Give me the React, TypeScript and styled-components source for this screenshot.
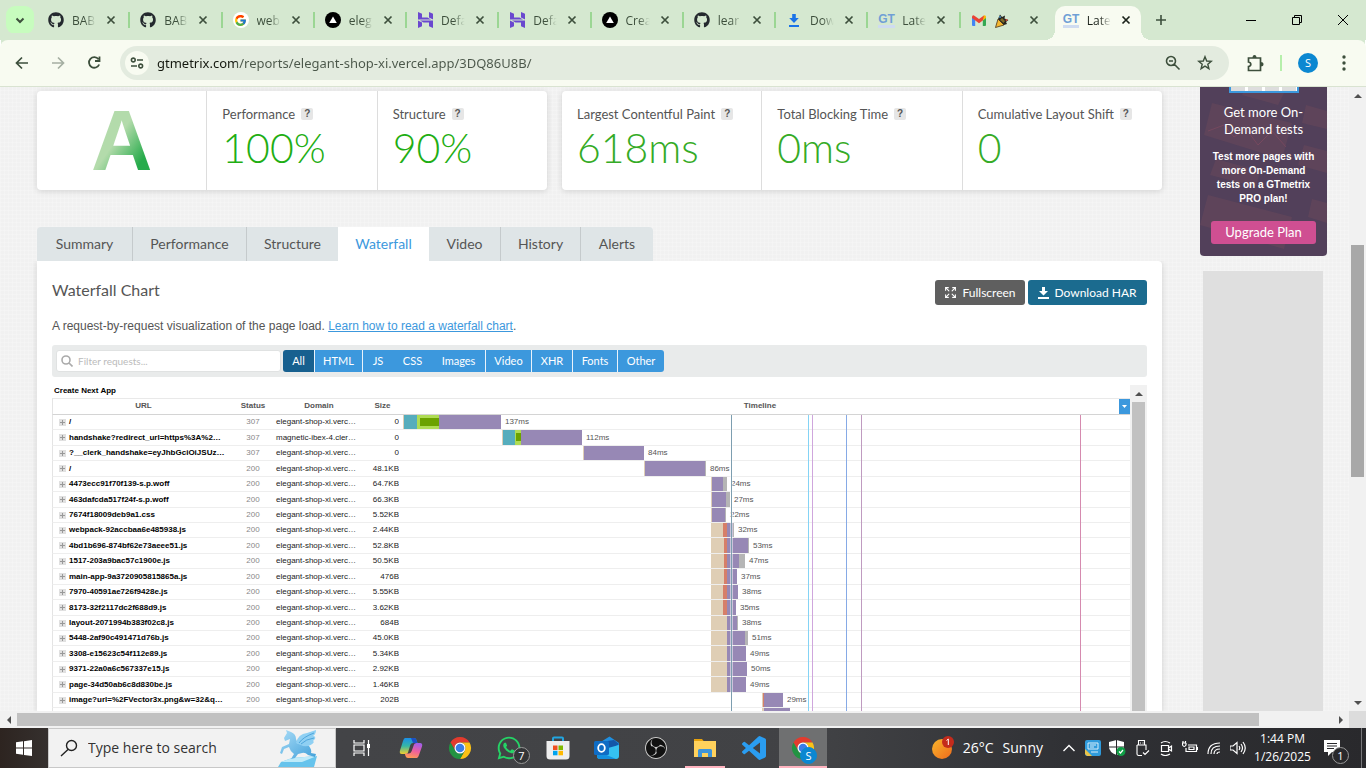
import React from 'react';
import styled, { createGlobalStyle, css } from 'styled-components';
import { FaGithub, FaWhatsapp } from 'react-icons/fa';
import { FcGoogle } from 'react-icons/fc';
import { SiObsstudio } from 'react-icons/si';
import { Expand } from 'lucide-react';

const UI = '"Open Sans", "Noto Sans", sans-serif';
const BRAND = 'Lato, "Open Sans", sans-serif';
const ARIAL = '"Liberation Sans", Arial, sans-serif';

const GlobalStyle = createGlobalStyle`
  * { box-sizing: border-box; }
  html, body { margin: 0; height: 100%; }
  #root { height: 100%; }
  body { font-family: ${ARIAL}; color: #555; overflow: hidden; }
  button, input { font: inherit; color: inherit; border: 0; margin: 0; padding: 0; background: none; }
  input { outline: 0; min-width: 0; }
  svg { display: block; flex: none; }
`;

const Screen = styled.div`
  height: 100vh;
  display: flex;
  flex-direction: column;
`;

/* ---------- browser tabs ---------- */

const TabStrip = styled.header`
  display: flex;
  height: 40px;
  flex: none;
  background: #d5e8d0;
  font: 12px/16px ${UI};
  color: #3d4f3c;
`;

const TabSearch = styled.button`
  width: 28px;
  height: 28px;
  margin: 6px 4px 0 6px;
  flex: none;
  border-radius: 9px;
  background: #c7fcbe;
  display: grid;
  place-items: center;
`;

const Tabs = styled.nav`
  display: grid;
  grid-template-columns: repeat(12, minmax(0, 1fr));
  flex: 0 1 1107px;
  min-width: 0;
`;

const Tab = styled.div<{ $active?: boolean; $last?: boolean }>`
  position: relative;
  min-width: 0;
  display: flex;
  align-items: center;
  padding-left: 10px;
  ${p => !p.$active && !p.$last && css`
    &::after {
      content: '';
      position: absolute;
      right: 0;
      top: 12px;
      width: 2px;
      height: 16px;
      background: #9bd693;
    }
  `}
  ${p => p.$active && css`
    margin: 6px 4px 0 2px;
    padding: 0 0 6px 8px;
    border-radius: 10px 10px 0 0;
    background: #f8fbf1;
    color: #1c231b;
    &::before, &::after {
      content: '';
      position: absolute;
      bottom: 0;
      width: 10px;
      height: 10px;
    }
    &::before { left: -10px; background: radial-gradient(circle at 0 0, transparent 10px, #f8fbf1 10px); }
    &::after { right: -10px; background: radial-gradient(circle at 100% 0, transparent 10px, #f8fbf1 10px); }
  `}
`;

const Favicon = styled.span`
  width: 16px;
  height: 16px;
  flex: none;
  display: grid;
  place-items: center;
`;

const GtMark = styled.span`
  font: bold 12px/12px ${ARIAL};
  color: #6f9fd6;
  border-bottom: 3px solid #cfdcf0;
`;

const Disc = styled.span<{ $bg: string; $size?: number }>`
  width: ${p => p.$size ?? 16}px;
  height: ${p => p.$size ?? 16}px;
  border-radius: 50%;
  background: ${p => p.$bg};
  display: grid;
  place-items: center;
`;

const TabTitle = styled.span`
  width: 25px;
  margin: 2px 8px 0 8px;
  flex: none;
  overflow: hidden;
  white-space: nowrap;
  mask-image: linear-gradient(90deg, #000 50%, transparent 95%);
`;

const PlainButton = styled.button<{ $w?: number }>`
  width: ${p => p.$w ?? 16}px;
  flex: none;
  display: grid;
  place-items: center;
  &:disabled { color: #a5afa2; }
`;

const WindowControls = styled.div`
  display: flex;
  margin-left: auto;
  color: #000;
`;

/* ---------- address row ---------- */

const Toolbar = styled.div`
  display: flex;
  align-items: center;
  height: 47px;
  flex: none;
  padding: 0 5px 0 4px;
  background: #f8fbf1;
  border-bottom: 1px solid #d9e3d1;
  border-radius: 8px 8px 0 0;
  box-shadow: 0 -8px 0 -1px #d5e8d0;
  color: #3d4f3c;
`;

const AddressBar = styled.div`
  display: flex;
  align-items: center;
  flex: 1;
  height: 34px;
  margin: 0 9px 0 8px;
  padding: 0 8px 0 5px;
  border-radius: 17px;
  background: #e3ebdf;
`;

const SiteInfo = styled.button`
  width: 24px;
  height: 24px;
  margin-right: 8px;
  border-radius: 50%;
  background: #f8fbf1;
  display: grid;
  place-items: center;
`;

const Address = styled.input`
  flex: 1;
  height: 24px;
  font: 13px/24px "Noto Sans", ${UI};
  background: linear-gradient(90deg, #14180f 80px, #4b574a 80px);
  background-clip: text;
  -webkit-text-fill-color: transparent;
`;

const Divider = styled.span`
  width: 2px;
  height: 16px;
  margin: 0 7px 0 8px;
  background: #b6efab;
`;

const Avatar = styled.button<{ $size: number }>`
  width: ${p => p.$size}px;
  height: ${p => p.$size}px;
  border-radius: 50%;
  background: #0b87d1;
  color: #fff;
  font: 11px/16px ${UI};
`;

/* ---------- page ---------- */

const Viewport = styled.div`
  flex: 1;
  min-height: 0;
  display: grid;
  grid-template: minmax(0, 1fr) 17px / minmax(0, 1fr) 17px;
`;

const Page = styled.main`
  overflow: hidden;
  display: flex;
  gap: 38px;
  padding: 4px 22px 0 37px;
  background:
    repeating-linear-gradient(0deg, rgba(255, 255, 255, 0.2) 0 1px, transparent 1px 4px),
    repeating-linear-gradient(90deg, rgba(255, 255, 255, 0.2) 0 1px, transparent 1px 4px),
    #f1f1f1;
`;

const Content = styled.div`
  flex: 1;
  min-width: 0;
  display: flex;
  flex-direction: column;
`;

const Scores = styled.section`
  display: flex;
  gap: 15px;
  height: 99px;
  flex: none;
`;

const ScoreCard = styled.div<{ $grow: number }>`
  flex: ${p => p.$grow} 1 0;
  min-width: 0;
  display: flex;
  border-radius: 4px;
  background: #fff;
  box-shadow: 0 1px 6px rgba(0, 0, 0, 0.14);
`;

const ScoreCell = styled.div`
  flex: 1 1 0;
  min-width: 0;
  padding: 15px 0 0 15px;
  font-family: ${BRAND};
  & + & { border-left: 1px solid #ddd; }
`;

const ScoreLabel = styled.div`
  display: flex;
  align-items: center;
  gap: 6px;
  font-size: 13px;
  line-height: 16px;
  white-space: nowrap;
`;

const Help = styled.button`
  width: 12px;
  height: 12px;
  border-radius: 2px;
  background: #e6e6e6;
  font: bold 10px/12px ${ARIAL};
`;

const ScoreValue = styled.div<{ $color: string }>`
  font-size: 41px;
  line-height: 52px;
  font-weight: 300;
  color: ${p => p.$color};
`;

const Grade = styled.div`
  font: bold 85px/99px ${ARIAL};
  text-align: center;
  margin-top: -15px;
  padding-right: 15px;
  background: linear-gradient(125deg, #b3dbab 44%, #27ab4b 62%);
  background-clip: text;
  color: transparent;
`;

const ReportTabs = styled.nav`
  display: flex;
  height: 34px;
  margin-top: 37px;
  flex: none;
`;

const ReportTab = styled.button<{ $w: number; $active?: boolean; $line?: boolean }>`
  width: ${p => p.$w}px;
  background: ${p => (p.$active ? '#fff' : '#dfe5e7')};
  color: ${p => (p.$active ? '#3c98dd' : '#555')};
  border-right: ${p => (p.$line ? '1px solid #c5cacc' : '0')};
  font: 14px/34px ${BRAND};
  &:first-child { border-top-left-radius: 4px; }
  &:last-child { border-top-right-radius: 4px; }
`;

const Panel = styled.section`
  flex: 1;
  min-height: 0;
  display: flex;
  flex-direction: column;
  padding: 19px 15px 0;
  border-radius: 0 4px 0 0;
  background: #fff;
  box-shadow: 0 1px 6px rgba(0, 0, 0, 0.14);
  clip-path: inset(0 -8px 0 -8px);
`;

const PanelHead = styled.div`
  display: flex;
  align-items: flex-start;
  gap: 3px;
  height: 25px;
  flex: none;
`;

const Title = styled.h2`
  margin: 0 auto 0 0;
  font: 16px/20px ${BRAND};
`;

const ActionButton = styled.button<{ $bg: string; $w: number }>`
  display: flex;
  align-items: center;
  justify-content: center;
  gap: 5px;
  width: ${p => p.$w}px;
  height: 25px;
  border-radius: 3px;
  background: ${p => p.$bg};
  color: #fff;
  font: 12px/25px ${BRAND};
`;

const Intro = styled.p`
  margin: 14px 0 11px;
  font-size: 12px;
  line-height: 15px;
  a { color: #3c98dd; }
`;

const FilterBar = styled.div`
  display: flex;
  align-items: center;
  height: 32px;
  flex: none;
  padding: 0 4px;
  border-radius: 3px;
  background: #e9ebeb;
`;

const FilterField = styled.label`
  display: flex;
  align-items: center;
  gap: 5px;
  width: 225px;
  height: 22px;
  margin-right: 2px;
  padding-left: 4px;
  border-radius: 3px;
  border: 1px solid #e0e2e2;
  background: #fff;
  color: #aaa;
  input { flex: 1; font: 10px/20px ${BRAND}; }
  input::placeholder { color: #bbb; }
`;

const FilterButton = styled.button<{ $w: number; $active?: boolean; $line?: boolean }>`
  width: ${p => p.$w}px;
  height: 22px;
  background: ${p => (p.$active ? '#17608f' : '#3c98dd')};
  border-right: ${p => (p.$line ? '1px solid #e9f3fb' : '0')};
  color: #fff;
  font: 11px/22px ${BRAND};
  &:first-of-type { border-radius: 3px 0 0 3px; }
  &:last-of-type { border-radius: 0 3px 3px 0; }
`;

const ChartPane = styled.div`
  flex: 1;
  min-height: 0;
  display: flex;
  margin-top: 8px;
  overflow: hidden;
`;

const ChartBody = styled.div`
  position: relative;
  flex: 1;
  min-width: 0;
  overflow: hidden;
`;

const Chart = styled.table`
  width: 100%;
  table-layout: fixed;
  border-spacing: 0;
  font-size: 8px;
  line-height: 10px;
  caption {
    height: 13px;
    padding-left: 2px;
    text-align: left;
    font-weight: bold;
    line-height: 11px;
    color: #000;
  }
  th {
    height: 17px;
    padding: 0 0 2px;
    border-top: 1px solid #e9e9e9;
    border-bottom: 1px solid #d4d4d4;
    color: #555;
  }
  th:last-child { padding-right: 13px; }
  th:first-child, td:first-child { border-left: 1px solid #e4e4e4; }
`;

const Row = styled.tr`
  height: 15px;
  &:nth-child(7n + 2), &:nth-child(7n + 4), &:nth-child(7n + 6) { height: 16px; }
`;

const Cell = styled.td<{ $align?: string; $color?: string; $strong?: boolean; $indent?: boolean }>`
  height: inherit;
  padding: 0 0 0 ${p => (p.$indent ? 4 : 0)}px;
  border-bottom: 1px solid #eee;
  vertical-align: middle;
  text-align: ${p => p.$align ?? 'left'};
  color: ${p => p.$color ?? '#222'};
  font-weight: ${p => (p.$strong ? 'bold' : 'normal')};
  white-space: nowrap;
  overflow: hidden;
`;

const UrlBox = styled.div`
  display: flex;
  align-items: center;
  gap: 3px;
  padding-left: 6px;
`;

const ExpandRow = styled.button`
  width: 7px;
  height: 7px;
  flex: none;
  background:
    linear-gradient(#999, #999) center / 5px 1px no-repeat,
    linear-gradient(#999, #999) center / 1px 5px no-repeat,
    #e0e0e0;
`;

const Track = styled.div`
  display: flex;
  height: 100%;
`;

const Segment = styled.span<{ $fill: string }>`
  flex: none;
  background: ${p => p.$fill};
`;

const Time = styled.span`
  align-self: center;
  padding-left: 4px;
  color: #555;
`;

const Markers = styled.div`
  position: absolute;
  inset: 30px 0 0 351px;
  pointer-events: none;
`;

const Marker = styled.i<{ $color: string; $halo?: boolean }>`
  position: absolute;
  top: 0;
  bottom: 0;
  width: 1px;
  background: ${p => p.$color};
  box-shadow: ${p => (p.$halo ? '-1px 0 rgba(255,255,255,.5), 1px 0 rgba(255,255,255,.5)' : 'none')};
`;

const ColumnMenu = styled.button`
  position: absolute;
  top: 14px;
  right: 0;
  width: 11px;
  height: 15px;
  background: #3c98dd;
  display: grid;
  place-items: center;
`;

const InnerScroll = styled.div`
  width: 17px;
  flex: none;
  display: flex;
  flex-direction: column;
  align-items: center;
  background: #f1f1f1;
  &::after {
    content: '';
    flex: 1;
    width: 13px;
    background: #c1c1c1;
  }
`;

/* ---------- side column ---------- */

const Side = styled.aside`
  width: 127px;
  flex: none;
  display: flex;
  flex-direction: column;
  margin-top: -4px;
`;

const Promo = styled.section`
  position: relative;
  height: 169px;
  flex: none;
  overflow: hidden;
  border-radius: 0 0 4px 4px;
  background: #52405a;
  color: #fff;
  text-align: center;
`;

const PromoArt = styled.svg`
  position: absolute;
  inset: 0;
`;

const PromoBody = styled.div`
  position: relative;
  padding: 0 10px;
  h3 { margin: 11px 0 12px; font: 13px/17px ${BRAND}; }
  p { margin: 0 0 15px; font: bold 10px/14px ${ARIAL}; white-space: nowrap; }
`;

const PromoPicture = styled.div`
  width: 70px;
  height: 6px;
  margin: 0 auto;
  border: solid #3c98dd;
  border-width: 0 2px 2px;
  background: repeating-linear-gradient(90deg, #ddd 0 14px, #fff 14px 17px);
`;

const Upgrade = styled.button`
  display: block;
  width: 105px;
  height: 23px;
  margin: 0 auto;
  border-radius: 3px;
  background: #cf4f92;
  color: #fff;
  font: 13px/23px ${BRAND};
`;

const AdSlot = styled.div`
  flex: 1;
  margin: 15px 4px 0 3px;
  background: #dfdfdf;
`;

/* ---------- scrollbars ---------- */

const VScroll = styled.div`
  display: flex;
  flex-direction: column;
  align-items: center;
  background: #f1f1f1;
`;

const HScroll = styled.div`
  display: flex;
  align-items: center;
  background: #f1f1f1;
`;

const Arrow = styled.span`
  width: 17px;
  height: 17px;
  flex: none;
  display: grid;
  place-items: center;
`;

const Space = styled.span<{ $n: number }>`
  flex: ${p => p.$n} 1 0;
`;

const VThumb = styled.span`
  flex: 232 1 0;
  width: 13px;
  background: #a8a8a8;
`;

const HThumb = styled.span`
  flex: 1242 1 0;
  height: 13px;
  background: #c1c1c1;
`;

const Corner = styled.div`
  background: #dcdcdc;
`;

/* ---------- taskbar ---------- */

const Taskbar = styled.footer`
  display: flex;
  align-items: stretch;
  height: 40px;
  flex: none;
  background: linear-gradient(90deg, #2d2420 0, #35302e 48px, #434447 340px, #414245 60%, #303135 78%, #29292c 100%);
  color: #fff;
  font: 14px/20px ${UI};
`;

const SearchBox = styled.label`
  display: flex;
  align-items: center;
  width: 288px;
  padding: 0 15px 0 11px;
  border: 1px solid #c8c8c8;
  background: #f2f2f2;
  color: #222;
  input { flex: 1; margin-left: 10px; font: 14px/20px ${UI}; }
  input::placeholder { color: #333; }
`;

const Apps = styled.nav`
  display: flex;
  gap: 1px;
`;

const AppButton = styled.button<{ $wide?: boolean; $active?: boolean; $open?: boolean }>`
  position: relative;
  width: ${p => (p.$wide ? 50 : 48)}px;
  display: grid;
  place-items: center;
  background: ${p => (p.$active ? '#6f7071' : 'none')};
  color: #fff;
  &::after {
    content: '';
    position: absolute;
    bottom: 0;
    height: 2px;
    left: ${p => (p.$active ? 0 : 4)}px;
    right: ${p => (p.$active ? 0 : 4)}px;
    background: ${p => (p.$active || p.$open ? '#ffb3bf' : 'none')};
  }
`;

const Badge = styled.span<{ $bg: string; $edge: string; $right?: number }>`
  position: absolute;
  right: ${p => p.$right ?? 3}px;
  bottom: 4px;
  width: 17px;
  height: 17px;
  border-radius: 50%;
  border: 1px solid ${p => p.$edge};
  background: ${p => p.$bg};
  color: #fff;
  font: 11px/15px ${UI};
  text-align: center;
`;

const Weather = styled.button`
  display: flex;
  align-items: center;
  gap: 9px;
  margin-left: auto;
  margin-right: 13px;
  color: #fff;
  white-space: nowrap;
`;

const Tray = styled.div`
  display: flex;
  align-items: center;
  color: #fff;
`;

const Clock = styled.time`
  width: 65px;
  font-size: 12px;
  line-height: 18px;
  text-align: center;
  align-self: center;
  white-space: nowrap;
`;

const Notices = styled.button`
  position: relative;
  width: 47px;
  margin-right: 4px;
  padding-right: 12px;
  border-right: 1px solid #77777a;
  display: grid;
  place-items: center;
`;

/* ---------- icons ---------- */

const Stroke = ({ d, size = 16, w = 2, box = 16 }: { d: string; size?: number; w?: number; box?: number }) => (
  <svg width={size} height={size} viewBox={`0 0 ${box} ${box}`} fill="none" stroke="currentColor" strokeWidth={w}>
    <path d={d} />
  </svg>
);

const VercelIcon = () => (
  <Disc $bg="#000">
    <svg width="8" height="8" viewBox="0 0 8 8"><path d="M4 0.5 7.8 7H0.2Z" fill="#fff" /></svg>
  </Disc>
);

const HostIcon = () => (
  <svg width="15" height="16" viewBox="0 0 15 16" fill="#6a48cf">
    <path d="M0 0 4 1.800V5.500H9.500L13 7.500H4L0 7.500Z" />
    <path d="M11 0 15 1.800V7.500L11 5.500Z" />
    <path d="M2 8.500H15V16L11 14.200V10.500H5.500Z" />
    <path d="M0 8.500 4 10.500V14.200L0 16Z" />
  </svg>
);

const DownloadTabIcon = () => (
  <svg width="10" height="13" viewBox="0 0 10 13" fill="#1a73e8">
    <path d="M3.200 0H6.800V4H9.800L5 9 0.200 4H3.200Z" />
    <rect y="11" width="10" height="2" />
  </svg>
);

const GmailIcon = () => (
  <svg width="14" height="11" viewBox="0 0 14 11">
    <path d="M0 1.500V10Q0 11 1 11H3.200V5Z" fill="#4285f4" />
    <path d="M14 1.500V10Q14 11 13 11H10.800V5Z" fill="#34a853" />
    <path d="M10.800 1.200 12 .4Q14 0 14 2V3L10.800 5.400Z" fill="#fbbc04" />
    <path d="M0 2Q0 0 2 .4L7 4 12 .4 10.800 5.400 7 8.200 0 3Z" fill="#ea4335" />
  </svg>
);

const PartyIcon = () => (
  <svg width="14" height="14" viewBox="0 0 14 14">
    <path d="M0.500 13.500 3 5 9 11Z" fill="#f5b731" stroke="#4a3415" strokeWidth=".8" />
    <path d="M3 5 5 .5 7 3 10 1.500 9.500 4.500 13.500 6 11 8 12 10 9 11Z" fill="#26241f" />
    <path d="M5 6 7 4 10 7 8.500 9Z" fill="#7d6a2a" />
    <circle cx="11.500" cy="6" r="1" fill="#d5483a" />
    <circle cx="5" cy="3" r=".9" fill="#4c9ad4" />
  </svg>
);

const ExtensionIcon = () => (
  <svg width="18" height="18" viewBox="0 0 18 18" fill="currentColor">
    <path d="M2.500 4H14.500V16.500H2.500V12.500Q4.800 12 4.800 10.200T2.500 8Z" fill="none" stroke="currentColor" strokeWidth="1.700" />
    <path d="M6.500 4Q6.500 1 8.500 1T10.500 4ZM14.500 8Q17.500 8 17.500 10.200T14.500 12.400Z" />
  </svg>
);

const ChromeIcon = () => (
  <svg width="24" height="24" viewBox="0 0 24 24">
    <path d="M2.470 6.500A11 11 0 0 1 21.530 6.500H12A5.500 5.500 0 0 0 7.240 14.750Z" fill="#e33b2e" />
    <path d="M21.530 6.500A11 11 0 0 1 12 23L16.760 14.750A5.500 5.500 0 0 0 12 6.500Z" fill="#fbc116" />
    <path d="M12 23A11 11 0 0 1 2.470 6.500L7.240 14.750A5.500 5.500 0 0 0 16.760 14.750Z" fill="#229342" />
    <circle cx="12" cy="12" r="5.500" fill="#fff" />
    <circle cx="12" cy="12" r="4.300" fill="#3a7de8" />
  </svg>
);

const CopilotIcon = () => (
  <svg width="24" height="22" viewBox="0 0 24 22">
    <defs>
      <linearGradient id="cpA" x1="0" y1="0" x2="0" y2="1">
        <stop offset="0" stopColor="#1b8fe8" /><stop offset=".5" stopColor="#35b7a6" /><stop offset="1" stopColor="#f1cf2d" />
      </linearGradient>
      <linearGradient id="cpB" x1="0.600" y1="0" x2="0.300" y2="1">
        <stop offset="0" stopColor="#a45ee8" /><stop offset=".5" stopColor="#ef5f9d" /><stop offset="1" stopColor="#ff9b53" />
      </linearGradient>
    </defs>
    <path d="M6 1H15Q17 1 17.500 3L18.500 6H14Q12 6 11.300 8L9 15.500Q8.500 17 6.500 17H3Q0 17 1 13.500L4 4Q5 1 6 1Z" fill="url(#cpA)" />
    <path d="M12 1H15Q17 1 17.500 3L18.500 6H14Z" fill="#1c4fc4" />
    <path d="M18 21H9Q7 21 6.500 19L5.800 16.500H10Q12 16 12.700 14L15 7.500Q15.500 6 17.500 6H21Q24 6 23 9.500L20 18Q19 21 18 21Z" fill="url(#cpB)" />
  </svg>
);

const StoreIcon = () => (
  <svg width="24" height="24" viewBox="0 0 24 24">
    <path d="M7 6V2.500Q7 1.500 8 1.500H16Q17 1.500 17 2.500V6" fill="none" stroke="#22a5e0" strokeWidth="2" />
    <path d="M.5 5H23.500V20Q23.500 23.500 20 23.500H4Q.5 23.500 .5 20Z" fill="#eee" />
    <rect x="7" y="9.500" width="4.500" height="4.500" fill="#f05022" />
    <rect x="12.500" y="9.500" width="4.500" height="4.500" fill="#7fba00" />
    <rect x="7" y="14.800" width="4.500" height="4.500" fill="#00a4ef" />
    <rect x="12.500" y="14.800" width="4.500" height="4.500" fill="#ffb900" />
  </svg>
);

const OutlookIcon = () => (
  <svg width="26" height="24" viewBox="0 0 26 24">
    <path d="M5 7 15.500 .5 25 7V12L5 14Z" fill="#1f8fe0" />
    <path d="M13 5 20 4 25 8 12 17Z" fill="#1457a8" />
    <path d="M3 15 25 9V20Q25 23 22 23H6Q3 23 3 20Z" fill="#35c1f1" />
    <path d="M3 15 22 23H6Q3 23 3 20Z" fill="#1490df" />
    <rect x="0" y="5" width="15" height="14" rx="1.500" fill="#0f6cc4" />
    <ellipse cx="7.500" cy="12" rx="3.300" ry="3.800" fill="none" stroke="#fff" strokeWidth="1.800" />
  </svg>
);

const FolderIcon = () => (
  <svg width="22" height="20" viewBox="0 0 22 20">
    <path d="M0 1H8L10 3.500H0Z" fill="#e8a20c" />
    <path d="M0 3H22V19H0Z" fill="#ffd15c" />
    <path d="M4 19V12.500Q4 11 5.500 11H16.500Q18 11 18 12.500V19H14V15H8V19Z" fill="#3f94d9" />
  </svg>
);

const CodeIcon = () => (
  <svg width="24" height="24" viewBox="0 0 24 24" fill="#2a9df1">
    <path d="M23.150 2.587 18.210.210a1.494 1.494 0 0 0-1.705.290l-9.460 8.630-4.120-3.128a.999.999 0 0 0-1.276.057L.327 7.261A1 1 0 0 0 .326 8.740L3.899 12 .326 15.260a1 1 0 0 0 .001 1.479L1.650 17.940a.999.999 0 0 0 1.276.057l4.120-3.128 9.460 8.630a1.492 1.492 0 0 0 1.704.290l4.942-2.377A1.500 1.500 0 0 0 24 20.060V3.939a1.500 1.500 0 0 0-.850-1.352zm-5.146 14.861L10.826 12l7.178-5.448z" />
  </svg>
);

const UnicornIcon = () => (
  <svg width="42" height="38" viewBox="0 0 42 38">
    <defs>
      <linearGradient id="uni" x1="0" y1="0" x2="1" y2="1">
        <stop offset="0" stopColor="#a9dcf7" /><stop offset="1" stopColor="#3f9fd9" />
      </linearGradient>
    </defs>
    <path d="M0 38 3 33 14 29 39 27 36 38Z" fill="#66c3ec" />
    <path d="M3 33 14 29 39 27 24 33Z" fill="#bdeaf9" />
    <path d="M6 9 9 4 8 1 13 3Q18 5 18 10L20 15Q26 14 31 17 34 21 33 24L38 25 37 28 30 26Q27 23 24 24L20 25 17 29 13 30 16 25Q12 22 11 18L6 20 4 25 2 24 4 18 11 15 12 10 7 12Z" fill="url(#uni)" />
    <path d="M18 14Q20 5 29 4L38 1Q38 5 35 7 38 7 37 10 34 12 36 13 33 18 25 17Z" fill="#8fd0f3" />
    <path d="M21 14Q25 8 36 4M23 15Q28 10 36 9" fill="none" stroke="#4ea6dc" strokeWidth="1" />
  </svg>
);

const TaskViewIcon = () => (
  <svg width="17" height="16" viewBox="0 0 17 16" fill="none" stroke="#fff" strokeWidth="1.200">
    <path d="M1 0V3H11V0M1 16V13H11V16M1 5H11V11H1ZM15.500 0V4M15.500 8V16" />
    <path d="M14 4H17V8H14Z" fill="#fff" stroke="none" />
  </svg>
);

const Triangle = ({ d }: { d: string }) => (
  <svg width="8" height="8" viewBox="0 0 8 8" fill="#505050"><path d={d} /></svg>
);

const CloseX = () => <Stroke size={10} box={10} w={1.7} d="M1.500 1.500 8.500 8.500M8.500 1.500 1.500 8.500" />;

/* ---------- data ---------- */

const browserTabs: { icon: React.ReactNode; title: React.ReactNode; active?: boolean }[] = [
  { icon: <FaGithub size={16} color="#24292e" />, title: 'BAB' },
  { icon: <FaGithub size={16} color="#24292e" />, title: 'BAB' },
  { icon: <Disc $bg="#fff"><FcGoogle size={13} /></Disc>, title: 'web' },
  { icon: <VercelIcon />, title: 'eleg' },
  { icon: <HostIcon />, title: 'Defa' },
  { icon: <HostIcon />, title: 'Defa' },
  { icon: <VercelIcon />, title: 'Crea' },
  { icon: <FaGithub size={16} color="#24292e" />, title: 'lear' },
  { icon: <DownloadTabIcon />, title: 'Dow' },
  { icon: <GtMark>GT</GtMark>, title: 'Late' },
  { icon: <GmailIcon />, title: <PartyIcon /> },
  { icon: <GtMark>GT</GtMark>, title: 'Late', active: true },
];

const reportTabs = [
  { name: 'Summary', w: 96, line: true },
  { name: 'Performance', w: 114, line: true },
  { name: 'Structure', w: 91 },
  { name: 'Waterfall', w: 91, active: true },
  { name: 'Video', w: 72, line: true },
  { name: 'History', w: 80, line: true },
  { name: 'Alerts', w: 72 },
];

const filters = [
  { name: 'All', w: 32, active: true, line: true },
  { name: 'HTML', w: 48, line: true },
  { name: 'JS', w: 30 },
  { name: 'CSS', w: 39 },
  { name: 'Images', w: 54, line: true },
  { name: 'Video', w: 46, line: true },
  { name: 'XHR', w: 41, line: true },
  { name: 'Fonts', w: 45, line: true },
  { name: 'Other', w: 46 },
];

const PHASES: Record<string, string> = {
  b: '#dfceb5',
  d: '#56adbd',
  c: '#afdc55',
  s: 'linear-gradient(#6ba200, #6ba200) 0 3px / 100% 8px no-repeat #afdc55',
  q: '#d67f69',
  w: '#9788b5',
  r: '#b5b5b5',
};

/* The timeline is divided into this many units; starts and phases are counted in them. */
const SPAN = 727;

type Request = [url: string, status: string, domain: string, size: string, start: number, phases: [string, number][], time: string];

const SHOP = 'elegant-shop-xi.verc…';

const requests: Request[] = [
  ['/', '307', SHOP, '0', 0, [['b', 1], ['d', 13], ['c', 3], ['s', 19], ['w', 62]], '137ms'],
  ['handshake?redirect_url=https%3A%2…', '307', 'magnetic-ibex-4.cler…', '0', 99, [['b', 1], ['d', 12], ['c', 1], ['s', 5], ['w', 61]], '112ms'],
  ['?__clerk_handshake=eyJhbGciOiJSUz…', '307', SHOP, '0', 180, [['b', 1], ['w', 60]], '84ms'],
  ['/', '200', SHOP, '48.1KB', 241, [['b', 1], ['w', 60], ['r', 1]], '86ms'],
  ['4473ecc91f70f139-s.p.woff', '200', SHOP, '64.7KB', 308, [['b', 1], ['w', 11], ['r', 4]], '24ms'],
  ['463dafcda517f24f-s.p.woff', '200', SHOP, '66.3KB', 308, [['b', 1], ['w', 14], ['r', 4]], '27ms'],
  ['7674f18009deb9a1.css', '200', SHOP, '5.52KB', 308, [['b', 1], ['w', 13], ['r', 1]], '22ms'],
  ['webpack-92accbaa6e485938.js', '200', SHOP, '2.44KB', 308, [['b', 12], ['q', 4], ['w', 6], ['r', 1]], '32ms'],
  ['4bd1b696-874bf62e73aeee51.js', '200', SHOP, '52.8KB', 308, [['b', 13], ['q', 3], ['w', 21], ['r', 1]], '53ms'],
  ['1517-203a9bac57c1900e.js', '200', SHOP, '50.5KB', 308, [['b', 13], ['q', 3], ['w', 12], ['r', 6]], '47ms'],
  ['main-app-9a3720905815865a.js', '200', SHOP, '476B', 308, [['b', 13], ['q', 3], ['w', 10]], '37ms'],
  ['7970-40591ae726f9428e.js', '200', SHOP, '5.55KB', 308, [['b', 12], ['q', 4], ['w', 11]], '38ms'],
  ['8173-32f2117dc2f688d9.js', '200', SHOP, '3.62KB', 308, [['b', 12], ['q', 4], ['w', 9]], '35ms'],
  ['layout-2071994b383f02c8.js', '200', SHOP, '684B', 308, [['b', 16], ['w', 10], ['r', 1]], '38ms'],
  ['5448-2af90c491471d76b.js', '200', SHOP, '45.0KB', 308, [['b', 16], ['w', 18], ['r', 3]], '51ms'],
  ['3308-e15623c54f112e89.js', '200', SHOP, '5.34KB', 308, [['b', 16], ['w', 19]], '49ms'],
  ['9371-22a0a6c567337e15.js', '200', SHOP, '2.92KB', 308, [['b', 16], ['w', 20]], '50ms'],
  ['page-34d50ab6c8d830be.js', '200', SHOP, '1.46KB', 308, [['b', 16], ['w', 19]], '49ms'],
  ['image?url=%2FVector3x.png&w=32&q…', '200', SHOP, '202B', 359, [['b', 1], ['q', 1], ['w', 19]], '29ms'],
  ['', '', '', '', 359, [['b', 2], ['w', 26]], ''],
];

const markers = [
  { at: 328, color: '#7d9eb0', halo: true },
  { at: 405, color: '#84d3f5' },
  { at: 409, color: '#cfa6dd' },
  { at: 443, color: '#86aae6' },
  { at: 458, color: '#bf9bc0' },
  { at: 677, color: '#d58aaf' },
];

const pct = (n: number) => `${(n / SPAN) * 100}%`;

const ScoreItem = ({ label, value, color }: { label: string; value: string; color: string }) => (
  <ScoreCell>
    <ScoreLabel>{label}<Help aria-label={`About ${label}`}>?</Help></ScoreLabel>
    <ScoreValue $color={color}>{value}</ScoreValue>
  </ScoreCell>
);

export default function App() {
  return (
    <Screen>
      <GlobalStyle />
      <TabStrip>
        <TabSearch aria-label="Search tabs"><Stroke size={10} box={10} d="M1.500 3.500 5 7 8.500 3.500" /></TabSearch>
        <Tabs>
          {browserTabs.map((t, i) => (
            <Tab key={i} $active={t.active} $last={i === browserTabs.length - 2}>
              <Favicon>{t.icon}</Favicon>
              <TabTitle>{t.title}</TabTitle>
              <PlainButton $w={12} aria-label="Close tab"><CloseX /></PlainButton>
            </Tab>
          ))}
        </Tabs>
        <PlainButton $w={32} aria-label="New tab"><Stroke size={12} box={12} w={1.6} d="M6 1V11M1 6H11" /></PlainButton>
        <WindowControls>
          <PlainButton $w={46} aria-label="Minimize"><Stroke size={10} box={10} w={1} d="M0 5.500H10" /></PlainButton>
          <PlainButton $w={46} aria-label="Restore"><Stroke size={10} box={10} w={1} d="M.5 2.500H7.500V9.500H.5ZM2.500 2.500V.5H9.500V7.500H7.500" /></PlainButton>
          <PlainButton $w={46} aria-label="Close"><Stroke size={10} box={10} w={1} d="M0 0 10 10M10 0 0 10" /></PlainButton>
        </WindowControls>
      </TabStrip>

      <Toolbar>
        <PlainButton $w={36} aria-label="Back"><Stroke size={14} box={14} w={1.7} d="M13 7H2M7 1.500 1.500 7 7 12.500" /></PlainButton>
        <PlainButton $w={36} aria-label="Forward" disabled><Stroke size={14} box={14} w={1.7} d="M1 7H12M7 1.500 12.500 7 7 12.500" /></PlainButton>
        <PlainButton $w={36} aria-label="Reload">
          <Stroke size={14} box={14} w={1.8} d="M11.500 3.200A5.300 5.300 0 1 0 12.200 8.500M12.500 .5V5H8" />
        </PlainButton>
        <AddressBar>
          <SiteInfo aria-label="Site information"><Stroke size={14} box={14} w={1.6} d="M7 4H13M1 10H7M5.200 4A1.900 1.900 0 1 0 1.400 4 1.900 1.900 0 1 0 5.200 4ZM12.600 10A1.900 1.900 0 1 0 8.800 10 1.900 1.900 0 1 0 12.600 10Z" /></SiteInfo>
          <Address aria-label="Address" defaultValue="gtmetrix.com/reports/elegant-shop-xi.vercel.app/3DQ86U8B/" />
          <PlainButton $w={32} aria-label="Zoom"><Stroke size={16} d="M10.500 6A4.500 4.500 0 1 0 1.500 6 4.500 4.500 0 1 0 10.500 6ZM9.300 9.300 14.500 14.500M4 6H8" w={1.6} /></PlainButton>
          <PlainButton $w={32} aria-label="Bookmark"><Stroke size={16} w={1.4} d="M8 1.700 9.700 6 14.300 6.300 10.800 9.200 11.900 13.700 8 11.200 4.100 13.700 5.200 9.200 1.700 6.300 6.300 6Z" /></PlainButton>
        </AddressBar>
        <PlainButton $w={34} aria-label="Extensions"><ExtensionIcon /></PlainButton>
        <Divider />
        <PlainButton $w={38} as="div"><Avatar $size={20}>S</Avatar></PlainButton>
        <PlainButton $w={34} aria-label="Menu">
          <svg width="4" height="16" viewBox="0 0 4 16" fill="currentColor"><circle cx="2" cy="2" r="1.700" /><circle cx="2" cy="8" r="1.700" /><circle cx="2" cy="14" r="1.700" /></svg>
        </PlainButton>
      </Toolbar>

      <Viewport>
        <Page>
          <Content>
            <Scores>
              <ScoreCard $grow={17}>
                <ScoreCell><Grade>A</Grade></ScoreCell>
                <ScoreItem label="Performance" value="100%" color="#1fae14" />
                <ScoreItem label="Structure" value="90%" color="#1fae14" />
              </ScoreCard>
              <ScoreCard $grow={20}>
                <ScoreItem label="Largest Contentful Paint" value="618ms" color="#35ab26" />
                <ScoreItem label="Total Blocking Time" value="0ms" color="#35ab26" />
                <ScoreItem label="Cumulative Layout Shift" value="0" color="#35ab26" />
              </ScoreCard>
            </Scores>
            <ReportTabs>
              {reportTabs.map(t => (
                <ReportTab key={t.name} $w={t.w} $active={t.active} $line={t.line}>{t.name}</ReportTab>
              ))}
            </ReportTabs>
            <Panel>
              <PanelHead>
                <Title>Waterfall Chart</Title>
                <ActionButton $bg="#5f5f5f" $w={90}><Expand size={13} />Fullscreen</ActionButton>
                <ActionButton $bg="#1b6b8f" $w={119}>
                  <svg width="11" height="12" viewBox="0 0 11 12" fill="#fff"><path d="M4 0H7V4H10L5.500 8.500 1 4H4ZM0 10H11V12H0Z" /></svg>
                  Download HAR
                </ActionButton>
              </PanelHead>
              <Intro>
                A request-by-request visualization of the page load. <a href="#learn">Learn how to read a waterfall chart</a>.
              </Intro>
              <FilterBar>
                <FilterField>
                  <Stroke size={12} box={12} w={1.6} d="M9 5A4 4 0 1 0 1 5 4 4 0 1 0 9 5ZM8 8 11.500 11.500" />
                  <input aria-label="Filter requests" placeholder="Filter requests..." />
                </FilterField>
                {filters.map(f => (
                  <FilterButton key={f.name} $w={f.w} $active={f.active} $line={f.line}>{f.name}</FilterButton>
                ))}
              </FilterBar>
              <ChartPane>
                <ChartBody>
                  <Chart>
                    <caption>Create Next App</caption>
                    <colgroup>
                      <col width="182" />
                      <col width="38" />
                      <col width="94" />
                      <col width="33" />
                      <col width="4" />
                      <col />
                    </colgroup>
                    <thead>
                      <tr>
                        <th>URL</th>
                        <th>Status</th>
                        <th>Domain</th>
                        <th>Size</th>
                        <th />
                        <th>Timeline</th>
                      </tr>
                    </thead>
                    <tbody>
                      {requests.map(([url, status, domain, size, start, phases, time], i) => (
                        <Row key={i}>
                          <Cell $strong $color="#000">
                            {url && <UrlBox><ExpandRow aria-label="Expand" />{url}</UrlBox>}
                          </Cell>
                          <Cell $align="center" $color="#888">{status}</Cell>
                          <Cell $indent>{domain}</Cell>
                          <Cell $align="right">{size}</Cell>
                          <Cell />
                          <Cell>
                            <Track>
                              <Segment $fill="none" style={{ width: pct(start) }} />
                              {phases.map(([kind, length], n) => (
                                <Segment key={n} $fill={PHASES[kind]} style={{ width: pct(length) }} />
                              ))}
                              <Time>{time}</Time>
                            </Track>
                          </Cell>
                        </Row>
                      ))}
                    </tbody>
                  </Chart>
                  <Markers>
                    {markers.map(m => (
                      <Marker key={m.at} $color={m.color} $halo={m.halo} style={{ left: pct(m.at) }} />
                    ))}
                  </Markers>
                  <ColumnMenu aria-label="Column menu">
                    <svg width="5" height="3" viewBox="0 0 5 3" fill="#fff"><path d="M0 0H5L2.500 3Z" /></svg>
                  </ColumnMenu>
                </ChartBody>
                <InnerScroll><Arrow><Triangle d="M0 6 4 2 8 6Z" /></Arrow></InnerScroll>
              </ChartPane>
            </Panel>
          </Content>
          <Side>
            <Promo>
              <PromoArt width="127" height="169" viewBox="0 0 127 169" fill="#6d4a5c" fillOpacity=".45" aria-hidden>
                <path d="M12 16 92 36 82 72 4 48ZM46 0 84 6 78 18 42 8ZM106 18 127 24V42L102 36ZM104 58 127 64V86L98 78ZM8 108 92 130 84 162 0 138ZM16 72 60 84 56 100 10 88ZM112 112 127 116V136L108 130Z" />
                <path d="M8 44 24 38 34 50 46 42 58 58 72 44 86 60" fill="none" stroke="#8d4d63" strokeOpacity=".5" />
              </PromoArt>
              <PromoBody>
                <PromoPicture />
                <h3>Get more On-<br />Demand tests</h3>
                <p>Test more pages with<br />more On-Demand<br />tests on a GTmetrix<br />PRO plan!</p>
                <Upgrade>Upgrade Plan</Upgrade>
              </PromoBody>
            </Promo>
            <AdSlot />
          </Side>
        </Page>
        <VScroll>
          <Arrow><Triangle d="M0 6 4 2 8 6Z" /></Arrow>
          <Space $n={141} /><VThumb /><Space $n={217} />
          <Arrow><Triangle d="M0 2 4 6 8 2Z" /></Arrow>
        </VScroll>
        <HScroll>
          <Arrow><Triangle d="M6 0 2 4 6 8Z" /></Arrow>
          <HThumb /><Space $n={73} />
          <Arrow><Triangle d="M2 0 6 4 2 8Z" /></Arrow>
        </HScroll>
        <Corner />
      </Viewport>

      <Taskbar>
        <PlainButton $w={48} aria-label="Start">
          <svg width="16" height="16" viewBox="0 0 16 16" fill="#fff"><path d="M0 2.300 7 1.300V7.600H0ZM8 1.200 16 0V7.600H8ZM0 8.500H7V14.800L0 13.800ZM8 8.500H16V16L8 14.900Z" /></svg>
        </PlainButton>
        <SearchBox>
          <Stroke size={18} box={18} w={1.4} d="M16.500 6.500A5 5 0 1 0 6.500 6.500 5 5 0 1 0 16.500 6.500ZM8 10.500 1 17" />
          <input aria-label="Search" placeholder="Type here to search" />
          <UnicornIcon />
        </SearchBox>
        <Apps>
          <AppButton $wide aria-label="Task view"><TaskViewIcon /></AppButton>
          <AppButton aria-label="Copilot"><CopilotIcon /></AppButton>
          <AppButton aria-label="Chrome"><ChromeIcon /></AppButton>
          <AppButton aria-label="WhatsApp"><FaWhatsapp size={26} color="#25d366" /><Badge $bg="#333537" $edge="#999">7</Badge></AppButton>
          <AppButton aria-label="Store"><StoreIcon /></AppButton>
          <AppButton aria-label="Outlook"><OutlookIcon /></AppButton>
          <AppButton aria-label="OBS"><Disc $bg="#111" $size={22}><SiObsstudio size={22} color="#ccc" /></Disc></AppButton>
          <AppButton $open aria-label="File Explorer"><FolderIcon /></AppButton>
          <AppButton aria-label="Code"><CodeIcon /></AppButton>
          <AppButton $active aria-label="Chrome window"><ChromeIcon /><Badge $bg="#0b87d1" $edge="#0b87d1" $right={10}>S</Badge></AppButton>
        </Apps>
        <Weather>
          <svg width="22" height="24" viewBox="0 0 22 24">
            <defs><linearGradient id="sun" x1="0" y1="0" x2="1" y2="1"><stop offset="0" stopColor="#f8b62c" /><stop offset="1" stopColor="#ee6a1c" /></linearGradient></defs>
            <circle cx="10" cy="13" r="10" fill="url(#sun)" />
            <circle cx="16" cy="6" r="6" fill="#c42b1c" />
            <path d="M14.500 4.500 16.300 3V9" fill="none" stroke="#fff" />
          </svg>
          <span>26°C</span>
          <span>Sunny</span>
        </Weather>
        <Tray>
          <PlainButton $w={25} aria-label="Hidden icons"><Stroke size={12} box={12} w={1.4} d="M.5 9 6 3.500 11.500 9" /></PlainButton>
          <PlainButton $w={24} aria-label="Graphics settings">
            <svg width="16" height="16" viewBox="0 0 16 16"><rect width="16" height="16" rx="2" fill="#2f9bdc" /><path d="M0 9 7 16H2L0 14Z" fill="#e8c34b" /><path d="M3 3H13V9H3ZM5 5H11M5 7H9M6 12H13" fill="none" stroke="#d8effb" /></svg>
          </PlainButton>
          <PlainButton $w={25} aria-label="Windows Security">
            <svg width="17" height="16" viewBox="0 0 17 16"><path d="M0 2 7.500 0 15 2V7Q15 12 7.500 15 0 12 0 7Z" fill="#fff" /><path d="M7.500 0V15M0 7H15" stroke="#28282b" /><circle cx="12" cy="11.500" r="4.500" fill="#0f9d45" /><path d="M10 11.500 11.500 13 14 10" fill="none" stroke="#fff" strokeWidth="1.200" /></svg>
          </PlainButton>
          <PlainButton $w={24} aria-label="Remove hardware"><Stroke size={16} w={1.1} d="M4.500 5V.5H10.500V5M3 5H12V10M3 5V14Q3 15.500 5 15.500H8M6 3H7M8.500 3H9.500M9 12.500 11 14.500 15 10.500" /></PlainButton>
          <PlainButton $w={24} aria-label="Camera"><Stroke size={16} w={1.2} d="M3.500 5.500H10.500V11.500H3.500ZM10.500 8 13.500 6V11L10.500 9M3 3Q7 0 12 3M3 14Q7 17 12 14" /></PlainButton>
          <PlainButton $w={24} aria-label="Battery"><Stroke size={16} w={1.2} d="M6 5H14.500V11.500H4V8M15.500 7V10M0 3H4M1 1V3M3.500 1V3M.5 3V5Q2.200 8 4 5V3M7 7H12V9.500H7Z" /></PlainButton>
          <PlainButton $w={24} aria-label="Network"><Stroke size={16} w={1.2} d="M2 14Q2 3 14 3M5 14Q5 6 14 6M8 14Q8 9 14 9M11 14Q11 12 14 12" /></PlainButton>
          <PlainButton $w={24} aria-label="Volume"><Stroke size={16} w={1.2} d="M0 6H3L7 2.500V13.500L3 10H0ZM9 6Q10.500 8 9 10M11 4Q14 8 11 12M13 2Q17.500 8 13 14" /></PlainButton>
          <Clock>1:44 PM<br />1/26/2025</Clock>
        </Tray>
        <Notices aria-label="Notifications">
          <svg width="16" height="16" viewBox="0 0 16 16"><path d="M0 0H16V12H8L4 16V12H0Z" fill="#fff" /><path d="M3 3.500H13M3 6H13M3 8.500H10" stroke="#29292c" /></svg>
          <Badge $bg="#29292c" $edge="#999" $right={12}>1</Badge>
        </Notices>
      </Taskbar>
    </Screen>
  );
}
